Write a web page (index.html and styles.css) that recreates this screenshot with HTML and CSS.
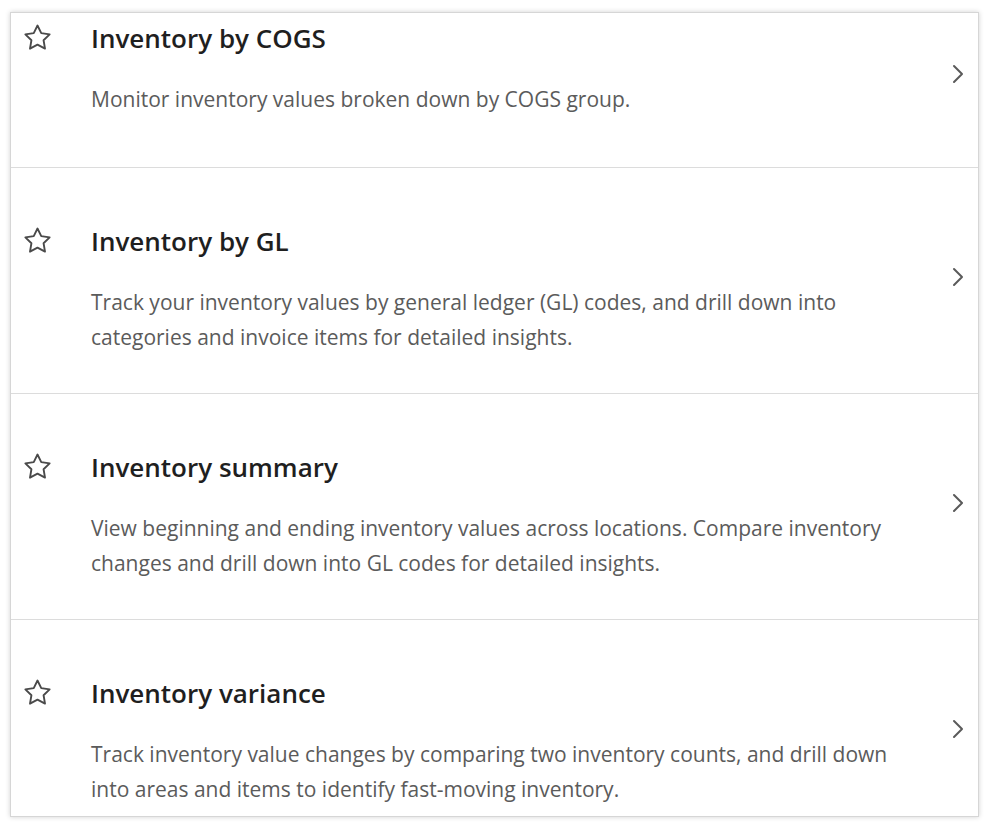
FILE: index.html
```html
<!DOCTYPE html>
<html lang="en">
<head>
<meta charset="utf-8">
<title>Inventory reports</title>
<link rel="stylesheet" href="styles.css">
</head>
<body>
<div class="card">
  <ul class="list">
    <li class="row">
      <span class="star"><svg viewBox="3 2.6 18 18" width="27" height="27"><path d="M12 3.6l2.5 5.1 5.6.8-4.05 3.95.95 5.6L12 16.4l-5 2.65.95-5.6L3.9 9.5l5.6-.8z"/></svg></span>
      <div class="text">
        <h3 class="title">Inventory by COGS</h3>
        <p class="desc">Monitor inventory values broken down by COGS group.</p>
      </div>
      <span class="chev"><svg viewBox="0 0 12 20" width="12" height="20"><polyline points="2,2 10,10 2,18"/></svg></span>
    </li>
    <li class="row">
      <span class="star"><svg viewBox="3 2.6 18 18" width="27" height="27"><path d="M12 3.6l2.5 5.1 5.6.8-4.05 3.95.95 5.6L12 16.4l-5 2.65.95-5.6L3.9 9.5l5.6-.8z"/></svg></span>
      <div class="text">
        <h3 class="title">Inventory by GL</h3>
        <p class="desc">Track your inventory values by general ledger (GL) codes, and drill down into categories and invoice items for detailed insights.</p>
      </div>
      <span class="chev"><svg viewBox="0 0 12 20" width="12" height="20"><polyline points="2,2 10,10 2,18"/></svg></span>
    </li>
    <li class="row">
      <span class="star"><svg viewBox="3 2.6 18 18" width="27" height="27"><path d="M12 3.6l2.5 5.1 5.6.8-4.05 3.95.95 5.6L12 16.4l-5 2.65.95-5.6L3.9 9.5l5.6-.8z"/></svg></span>
      <div class="text">
        <h3 class="title">Inventory summary</h3>
        <p class="desc">View beginning and ending inventory values across locations. Compare inventory changes and drill down into GL codes for detailed insights.</p>
      </div>
      <span class="chev"><svg viewBox="0 0 12 20" width="12" height="20"><polyline points="2,2 10,10 2,18"/></svg></span>
    </li>
    <li class="row">
      <span class="star"><svg viewBox="3 2.6 18 18" width="27" height="27"><path d="M12 3.6l2.5 5.1 5.6.8-4.05 3.95.95 5.6L12 16.4l-5 2.65.95-5.6L3.9 9.5l5.6-.8z"/></svg></span>
      <div class="text">
        <h3 class="title">Inventory variance</h3>
        <p class="desc">Track inventory value changes by comparing two inventory counts, and drill down into areas and items to identify fast-moving inventory.</p>
      </div>
      <span class="chev"><svg viewBox="0 0 12 20" width="12" height="20"><polyline points="2,2 10,10 2,18"/></svg></span>
    </li>
  </ul>
</div>
</body>
</html>
```

FILE: styles.css
```css
* { box-sizing: border-box; }
html, body { margin: 0; padding: 0; background: #fff; }
body {
  font-family: "Source Sans Pro", "Open Sans", "Liberation Sans", sans-serif;
  padding: 12px 13px 13px 10px;
}
.card {
  height: 805px;
  border: 1px solid #d6d6d6;
  box-shadow: 0 0 5px rgba(0, 0, 0, 0.18);
  overflow: hidden;
  background: #fff;
}
.list {
  list-style: none;
  margin: -48px 0 0 0;
  padding: 0;
}
.row {
  display: grid;
  grid-template-columns: 80px 1fr 40px;
  min-height: 203px;
  padding: 56px 0 38px 0;
  border-bottom: 1px solid #dcdcdc;
}
.star {
  align-self: start;
  margin: 3px 0 0 13px;
  display: block;
  height: 27px;
}
.star svg { display: block; fill: none; stroke: #4a4a4a; stroke-width: 1.25; stroke-linejoin: round; }
.text { max-width: 822px; }
.title {
  margin: 0;
  font-size: 26px;
  line-height: 34px;
  font-weight: 600;
  color: #1f1f1f;
}
.desc {
  margin: 27px 0 0 0;
  font-size: 21px;
  line-height: 35px;
  color: #5b5b5b;
}
.chev {
  align-self: start;
  margin: 43px 0 0 0;
  justify-self: start;
  padding-left: 14px;
  height: 20px;
}
.chev svg { display: block; fill: none; stroke: #5a5a5a; stroke-width: 2; stroke-linecap: round; stroke-linejoin: round; }
```
